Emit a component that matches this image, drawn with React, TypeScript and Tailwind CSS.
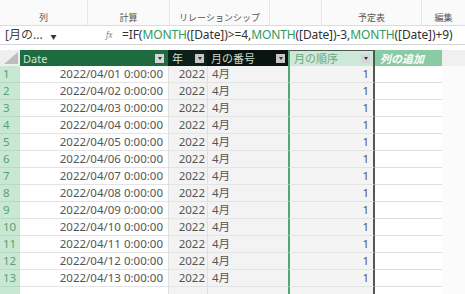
import React from 'react'

const FONT = { fontFamily: '"Noto Sans", "Noto Sans CJK JP", sans-serif' }

const RIBBON = [
  { label: '列', w: 'w-[88px]' },
  { label: '計算', w: 'w-[82px]' },
  { label: 'リレーションシップ', w: 'w-[100px]' },
  { label: '', w: 'w-[52px]' },
  { label: '予定表', w: 'w-[100px]' },
  { label: '編集', w: 'flex-1' },
]

const ROWS = Array.from({ length: 13 }, (_, i) => i + 1)

const Drop = ({ dark }: { dark?: boolean }) => (
  <span className={`w-[9px] h-[9px] flex items-center justify-center ${dark ? 'bg-[#c8c8c8]' : 'bg-[#d6d6d6]'}`}>
    <span className="w-0 h-0 border-l-[2.5px] border-r-[2.5px] border-t-[3px] border-l-transparent border-r-transparent border-t-[#333]" />
  </span>
)

const M = ({ children }: { children: React.ReactNode }) => <span className="text-[#2f9a5c]">{children}</span>

const App: React.FC = () => {
  return (
    <div className="w-[465px] h-[294px] overflow-hidden bg-white text-[#4a4a4a]" style={FONT}>
      {/* ribbon */}
      <div className="flex h-[26px] bg-[#fafafa] border-b border-[#dcdcdc]">
        {RIBBON.map((r, i) => (
          <div key={i} className={`${r.w} flex items-end justify-center pb-[3px] border-r border-[#e6e6e6] last:border-r-0`}>
            <span className="text-[9px] text-[#555] leading-none">{r.label}</span>
          </div>
        ))}
      </div>

      {/* formula bar */}
      <div className="flex items-center h-[19px] border-b border-[#d4d4d4] bg-white">
        <div className="w-[106px] flex items-center pl-[5px] gap-[8px]">
          <span className="text-[12px] text-[#444] leading-none">[月の...</span>
          <span className="text-[6px] leading-none text-[#333] mt-[3px]">▼</span>
        </div>
        <span className="w-[16px] text-[8px] italic text-[#888] leading-none">fx</span>
        <span className="text-[12px] leading-none text-[#333] tracking-[-0.1px] whitespace-nowrap">
          =IF(<M>MONTH</M>([Date])&gt;=4,<M>MONTH</M>([Date])-3,<M>MONTH</M>([Date])+9)
        </span>
      </div>

      <div className="h-[5px] bg-white" />

      {/* header */}
      <div className="flex h-[16px] text-[11px] leading-none">
        <div className="w-[20px] bg-[#efefef] flex items-end justify-end p-[2px]">
          <svg width="14" height="12" viewBox="0 0 14 12">
            <polygon points="14,0 14,12 0,12" fill="#bdbdbd" />
          </svg>
        </div>
        <div className="w-[148px] bg-[#1f6b40] text-[#cfe3d6] flex items-center justify-between pl-[3px] pr-[4px]">
          <span>Date</span>
          <Drop />
        </div>
        <div className="w-[39px] bg-[#0c2218] text-[#cfe3d6] flex items-center justify-between pl-[4px] pr-[3px]">
          <span>年</span>
          <Drop dark />
        </div>
        <div className="w-[81px] bg-[#0a1410] text-[#c9dccf] flex items-center justify-between pl-[4px] pr-[3px]">
          <span>月の番号</span>
          <Drop dark />
        </div>
        <div className="w-[87px] bg-[#cfe9d8] text-[#6aa883] flex items-center justify-between pl-[4px] pr-[3px] border-l-2 border-[#4fa677] border-r-2 border-r-[#4c5a52] border-t border-t-[#4c5a52]">
          <span>月の順序</span>
          <Drop />
        </div>
        <div className="w-[67px] bg-[#89cba4] text-white italic font-semibold flex items-center pl-[5px]">
          <span>列の追加</span>
        </div>
        <div className="flex-1 bg-[#f0f0f0]" />
      </div>

      {/* rows */}
      {[...ROWS, 14].map((n) => (
        <div key={n} className="flex h-[17px] text-[11.5px] leading-none text-[#555]">
          <div className="w-[20px] bg-[#c8e8d3] text-[#5e9c77] flex items-center pl-[3px] border-b border-[#b4dcc2]">
            {n <= 13 ? n : ''}
          </div>
          <div className="w-[148px] bg-white flex items-center justify-end pr-[5px] border-b border-[#e4e4e4]">
            {n <= 13 ? `2022/04/${String(n).padStart(2, '0')} 0:00:00` : ''}
          </div>
          <div className="w-[39px] bg-[#f3f3f3] flex items-center justify-end pr-[2px] border-l border-[#e0e0e0] border-b border-b-[#e4e4e4]">
            {n <= 13 ? '2022' : ''}
          </div>
          <div className="w-[81px] bg-[#f3f3f3] flex items-center pl-[4px] border-l border-[#e0e0e0] border-b border-b-[#e4e4e4]">
            {n <= 13 ? '4月' : ''}
          </div>
          <div className="w-[87px] bg-[#f4f4f4] flex items-center justify-end pr-[4px] border-l-2 border-[#4fa677] border-r-2 border-r-[#4c5a52] border-b border-b-[#e4e4e4]">
            {n <= 13 ? '1' : ''}
          </div>
          <div className="w-[67px] bg-white border-b border-[#dedede]" />
          <div className="flex-1 bg-[#fbfbfb]" />
        </div>
      ))}
    </div>
  )
}

export default App
